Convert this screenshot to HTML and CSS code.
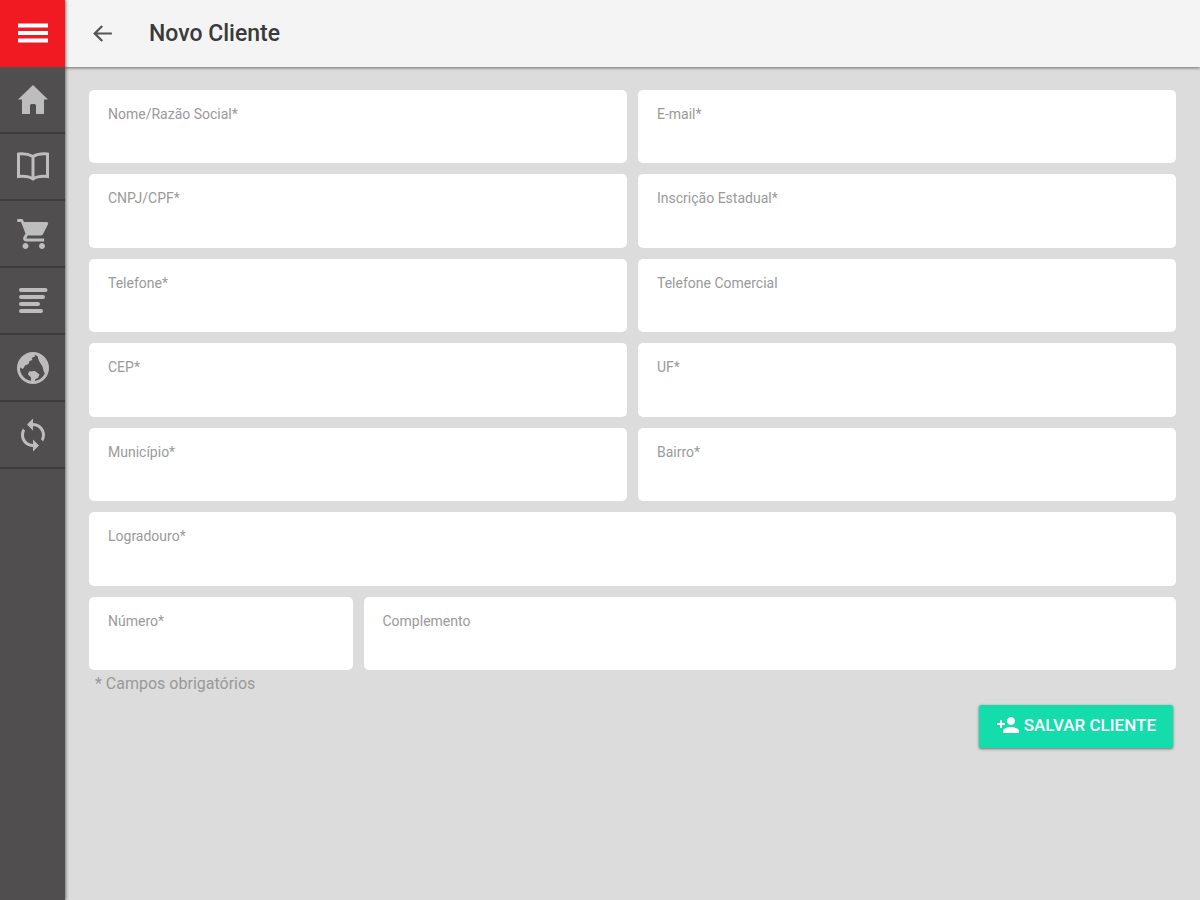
FILE: index.html
```
<!DOCTYPE html>
<html lang="pt-BR">
<head>
  <meta charset="UTF-8">
  <meta name="viewport" content="width=device-width, initial-scale=1">
  <title>Novo Cliente</title>
  <link rel="stylesheet" href="styles.css">
</head>
<body>
  <nav class="sidebar">
    <button type="button" class="menu-button" aria-label="Menu">
      <svg viewBox="0 0 36 36"><path d="M3 7.500h30v4H3zM3 15h30v4H3zM3 22.500h30v4H3z"/></svg>
    </button>
    <a class="nav-item" href="#inicio" aria-label="Início">
      <svg viewBox="0 0 36 36"><path d="M18 3L3 17.500h4V32h8V23.500q0-1.500 1.500-1.500h3q1.500 0 1.500 1.500V32h8V17.500h4z"/></svg>
    </a>
    <a class="nav-item" href="#catalogo" aria-label="Catálogo">
      <svg viewBox="0 0 36 36"><path class="line" d="M18 7.500C13.500 5 9 4.500 3.500 5v22.500C9 27 13.500 27 18 30c4.500-3 9-3 14.500-2.500V5C27 4.500 22.500 5 18 7.500zM18 7.500V30"/></svg>
    </a>
    <a class="nav-item" href="#pedidos" aria-label="Pedidos">
      <svg viewBox="0 0 24 24"><path d="M7 18c-1.100 0-1.990.9-1.990 2S5.900 22 7 22s2-.9 2-2-.9-2-2-2zM1.500 2v2H4l3 7.590-1.350 2.450c-.16.28-.25.61-.25.960 0 1.100.9 2 2 2h12v-2H7.820c-.14 0-.25-.11-.25-.25l.03-.12.900-1.630h8.450c.75 0 1.410-.41 1.750-1.030L22 5.480A1 1 0 0 0 21.200 4H6.010L5 2zM18 18c-1.100 0-1.990.9-1.990 2s.89 2 1.990 2 2-.9 2-2-.9-2-2-2z"/></svg>
    </a>
    <a class="nav-item" href="#relatorios" aria-label="Relatórios">
      <svg viewBox="0 0 36 36"><path class="line round" d="M6 7h24.500M6 14h22M6 21h17M6 28h20"/></svg>
    </a>
    <a class="nav-item" href="#site" aria-label="Site">
      <svg viewBox="0 0 36 36"><circle class="line" cx="18" cy="18" r="14.500"/><path d="M6 10l6-5 7-1.500 1 3-3.500 1.500 1 2-3 1-1 3-3.500 1.500-2 3.500-4-2zM14 21.500l6-.5 4.500 3.500-1.500 3.500-2.500 1-1.500 3.500-3-1v-4l-3-3zM22 4.500l6 4 3.500 7-.5 8-2-1-1.500-6-3.500-5.500z"/></svg>
    </a>
    <a class="nav-item" href="#sincronizar" aria-label="Sincronizar">
      <svg viewBox="0 0 24 24"><path d="M12 4V1L8 5l4 4V6c3.310 0 6 2.690 6 6 0 1.010-.25 1.970-.7 2.800l1.460 1.460A7.930 7.930 0 0 0 20 12c0-4.420-3.580-8-8-8zm0 14c-3.310 0-6-2.690-6-6 0-1.010.25-1.970.7-2.800L5.240 7.740A7.930 7.930 0 0 0 4 12c0 4.420 3.580 8 8 8v3l4-4-4-4v3z"/></svg>
    </a>
  </nav>

  <div class="page">
    <header class="topbar">
      <a class="back" href="#clientes" aria-label="Voltar">
        <svg viewBox="0 0 24 24"><path d="M21 11H7l5.500-5.500L11 4l-8 8 8 8 1.500-1.500L7 13h14z"/></svg>
      </a>
      <h1 class="title">Novo Cliente</h1>
    </header>

    <form class="client-form">
      <div class="fields">
        <div class="field half">
          <label for="nome">Nome/Razão Social*</label>
          <input type="text" id="nome" required>
        </div>
        <div class="field half">
          <label for="email">E-mail*</label>
          <input type="email" id="email" required>
        </div>
        <div class="field half">
          <label for="cnpj">CNPJ/CPF*</label>
          <input type="text" id="cnpj" required>
        </div>
        <div class="field half">
          <label for="inscricao">Inscrição Estadual*</label>
          <input type="text" id="inscricao" required>
        </div>
        <div class="field half">
          <label for="telefone">Telefone*</label>
          <input type="tel" id="telefone" required>
        </div>
        <div class="field half">
          <label for="telefoneComercial">Telefone Comercial</label>
          <input type="tel" id="telefoneComercial">
        </div>
        <div class="field half">
          <label for="cep">CEP*</label>
          <input type="text" id="cep" required>
        </div>
        <div class="field half">
          <label for="uf">UF*</label>
          <input type="text" id="uf" required>
        </div>
        <div class="field half">
          <label for="municipio">Município*</label>
          <input type="text" id="municipio" required>
        </div>
        <div class="field half">
          <label for="bairro">Bairro*</label>
          <input type="text" id="bairro" required>
        </div>
        <div class="field full">
          <label for="logradouro">Logradouro*</label>
          <input type="text" id="logradouro" required>
        </div>
        <div class="field">
          <label for="numero">Número*</label>
          <input type="text" id="numero" required>
        </div>
        <div class="field wide">
          <label for="complemento">Complemento</label>
          <input type="text" id="complemento">
        </div>
      </div>
      <p class="note">* Campos obrigatórios</p>
      <button type="submit" class="save-button">
        <svg viewBox="0 0 24 24"><path d="M15 12c2.210 0 4-1.790 4-4s-1.790-4-4-4-4 1.790-4 4 1.790 4 4 4zm-9-2V7H4v3H1v2h3v3h2v-3h3v-2H6zm9 4c-2.670 0-8 1.340-8 4v2h16v-2c0-2.660-5.330-4-8-4z"/></svg>
        <span>SALVAR CLIENTE</span>
      </button>
    </form>
  </div>
</body>
</html>
```
FILE: styles.css
```
* {
  box-sizing: border-box;
}

body {
  display: flex;
  min-height: 100vh;
  margin: 0;
  font-family: Roboto, "Liberation Sans", sans-serif;
  background-color: #dcdcdc;
}

svg {
  display: block;
  fill: currentColor;
}

.line {
  fill: none;
  stroke: currentColor;
  stroke-width: 3;
}

.round {
  stroke-linecap: round;
  stroke-width: 4;
}

/* Sidebar */
.sidebar {
  display: flex;
  flex-direction: column;
  flex: none;
  width: 65px;
  background-color: #504e4f;
  box-shadow: 1px 0 3px rgba(0, 0, 0, 0.5);
  z-index: 2;
}

.menu-button,
.nav-item {
  display: flex;
  align-items: center;
  justify-content: center;
  height: 67px;
  padding: 0;
  border: 0;
}

.menu-button {
  background-color: #f11a22;
  color: #ffffff;
  cursor: pointer;
}

.menu-button svg,
.nav-item svg {
  width: 36px;
  height: 36px;
}

.nav-item {
  color: #bdbdbd;
  border-bottom: 2px solid #3e3c3d;
}

/* Page */
.page {
  flex: 1;
  min-width: 0;
}

.topbar {
  display: flex;
  align-items: center;
  gap: 34px;
  height: 67px;
  padding: 0 25px;
  background-color: #f4f4f4;
  box-shadow: 0 1px 3px rgba(0, 0, 0, 0.5);
}

.back {
  color: #555555;
}

.back svg {
  width: 25px;
  height: 25px;
}

.title {
  margin: 0;
  font-size: 23px;
  font-weight: 500;
  color: #3a3a3a;
}

.client-form {
  display: flex;
  flex-direction: column;
  padding: 23px 24px;
}

.fields {
  display: grid;
  grid-template-columns: repeat(4, 1fr);
  grid-auto-rows: 1fr;
  gap: 11px;
  min-height: 580px;
}

.field {
  display: flex;
  flex-direction: column;
  padding: 14px 19px 8px;
  border-radius: 5px;
  background-color: #ffffff;
}

.half {
  grid-column: span 2;
}

.wide {
  grid-column: span 3;
}

.full {
  grid-column: 1 / -1;
}

.field label {
  font-size: 14px;
  line-height: 20px;
  color: #9a9a9a;
}

.field input {
  flex: 1;
  width: 100%;
  min-width: 0;
  padding: 0;
  border: 0;
  outline: none;
  background: transparent;
  font-family: inherit;
  font-size: 16px;
  color: #333333;
}

.note {
  margin: 4px 6px 11px;
  font-size: 16px;
  line-height: 20px;
  color: #999999;
}

.save-button {
  display: flex;
  align-items: center;
  align-self: flex-end;
  gap: 4px;
  height: 43px;
  margin-right: 3px;
  padding: 0 17px 3px;
  border: 0;
  border-radius: 2px;
  background-color: #14dcab;
  box-shadow: 0 1px 3px rgba(0, 0, 0, 0.5);
  font-family: inherit;
  font-size: 17px;
  font-weight: 500;
  color: #ffffff;
  cursor: pointer;
}

.save-button svg {
  width: 24px;
  height: 24px;
}
```
